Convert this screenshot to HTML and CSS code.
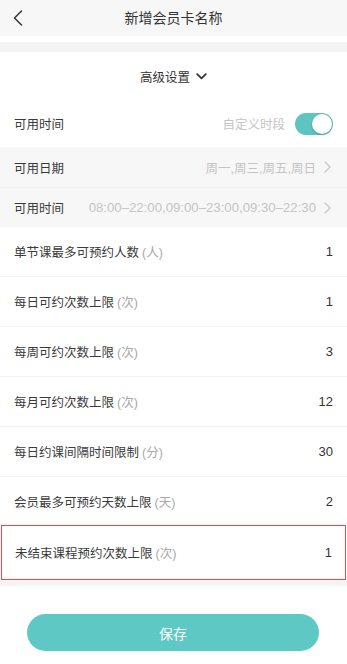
FILE: index.html
```html
<!DOCTYPE html>
<html lang="zh-CN">
<head>
<meta charset="utf-8">
<title>新增会员卡名称</title>
<link rel="stylesheet" href="styles.css">
</head>
<body>
<div class="page">
  <header class="topbar">
    <span class="back">
      <svg width="10" height="16" viewBox="0 0 10 16"><path d="M8.5 1 L1.5 8 L8.5 15" fill="none" stroke="#333" stroke-width="1.5" stroke-linecap="round" stroke-linejoin="round"/></svg>
    </span>
    <h1 class="title">新增会员卡名称</h1>
    <span></span>
  </header>
  <div class="spacer-white"></div>
  <div class="spacer-gray"></div>

  <section class="panel">
    <div class="adv">
      <span>高级设置</span>
      <svg class="down" width="11" height="7" viewBox="0 0 11 7"><path d="M1.2 1.2 L5.5 5.4 L9.8 1.2" fill="none" stroke="#333" stroke-width="1.8" stroke-linecap="round" stroke-linejoin="round"/></svg>
    </div>

    <div class="row row-toggle">
      <span class="label">可用时间</span>
      <span class="right">
        <span class="hint">自定义时段</span>
        <span class="switch"><span class="knob"></span></span>
      </span>
    </div>

    <div class="sub">
      <span class="label">可用日期</span>
      <span class="right"><span class="hint">周一,周三,周五,周日</span><svg class="chev" width="7" height="12" viewBox="0 0 7 12"><path d="M1 1 L6 6 L1 11" fill="none" stroke="#c8c8c8" stroke-width="1.3" stroke-linecap="round" stroke-linejoin="round"/></svg></span>
    </div>
    <div class="sub sub-2">
      <span class="label">可用时间</span>
      <span class="right"><span class="hint times">08:00–22:00,09:00–23:00,09:30–22:30</span><svg class="chev" width="7" height="12" viewBox="0 0 7 12"><path d="M1 1 L6 6 L1 11" fill="none" stroke="#c8c8c8" stroke-width="1.3" stroke-linecap="round" stroke-linejoin="round"/></svg></span>
    </div>

    <div class="row"><span class="label">单节课最多可预约人数<span class="unit">(人)</span></span><span class="val">1</span></div>
    <div class="row"><span class="label">每日可约次数上限<span class="unit">(次)</span></span><span class="val">1</span></div>
    <div class="row"><span class="label">每周可约次数上限<span class="unit">(次)</span></span><span class="val">3</span></div>
    <div class="row"><span class="label">每月可约次数上限<span class="unit">(次)</span></span><span class="val">12</span></div>
    <div class="row"><span class="label">每日约课间隔时间限制<span class="unit">(分)</span></span><span class="val">30</span></div>
    <div class="row row-last"><span class="label">会员最多可预约天数上限<span class="unit">(天)</span></span><span class="val">2</span></div>
    <div class="highlight">
      <div class="row row-in"><span class="label">未结束课程预约次数上限<span class="unit">(次)</span></span><span class="val">1</span></div>
    </div>
  </section>

  <div class="spacer-gray small"></div>

  <footer class="footer">
    <button class="save" type="button">保存</button>
  </footer>
</div>
</body>
</html>
```
FILE: styles.css
```css
html, body {
  margin: 0;
  padding: 0;
  background: #ffffff;
}
body {
  font-family: "Liberation Sans", "Noto Sans CJK SC", sans-serif;
  color: #3a3a3a;
  font-size: 12.5px;
}
.page {
  width: 347px;
  height: 664px;
  overflow: hidden;
  background: #fff;
}
.topbar {
  height: 36px;
  background: #f7f7f7;
  display: grid;
  grid-template-columns: 36px 1fr 36px;
  align-items: center;
}
.back {
  display: flex;
  align-items: center;
  padding-left: 13px;
}
.title {
  margin: 0;
  font-size: 14px;
  font-weight: normal;
  text-align: center;
  color: #333;
  line-height: 36px;
}
.spacer-white { height: 6px; background: #fff; }
.spacer-gray { height: 10px; background: #f4f4f4; }
.spacer-gray.small { height: 6px; }

.adv {
  height: 48px;
  display: flex;
  align-items: center;
  justify-content: center;
  gap: 6px;
  color: #333;
  font-size: 12.5px;
}
.down { margin-top: 1px; }

.row {
  height: 49px;
  border-bottom: 1px solid #f2f2f2;
  display: flex;
  align-items: center;
  justify-content: space-between;
  padding: 0 14px;
}
.row.row-toggle {
  height: 47px;
  border-bottom: none;
}
.row.row-last { height: 48px; border-bottom: none; }
.highlight {
  margin: 0 1px;
  background-color: rgb(242, 68, 68);
  padding: 1px;
}
.row.row-in {
  height: 53px;
  border-bottom: none;
  padding: 0 13px 0 13px;
  background: #fff;
}
.label { color: #3a3a3a; white-space: nowrap; }
.unit { color: #a8a8a8; margin-left: 3px; }
.val { color: #333; font-size: 13px; }
.right { display: flex; align-items: center; }
.hint { color: #c4c4c4; font-size: 12.5px; white-space: nowrap; }
.times { font-size: 13.2px; }

.switch {
  width: 38px;
  height: 22px;
  border-radius: 11px;
  background: #5cc5c0;
  margin-left: 10px;
  display: flex;
  align-items: center;
  justify-content: flex-end;
  padding: 0 1px;
  box-sizing: border-box;
}
.knob {
  width: 20px;
  height: 20px;
  border-radius: 50%;
  background: #fff;
  box-shadow: 0 1px 2px rgba(0,0,0,0.25);
}

.sub {
  height: 40px;
  background: #f7f7f7;
  display: flex;
  align-items: center;
  justify-content: space-between;
  padding: 0 16px 0 14px;
  box-sizing: border-box;
}
.sub-2 { border-top: 1px solid #efefef; }
.chev {
  margin-left: 8px;
  display: block;
}

.footer {
  padding-top: 28px;
  display: flex;
  justify-content: center;
}
.save {
  width: 292px;
  height: 37px;
  border: none;
  border-radius: 19px;
  background: #5ec8c5;
  color: #fff;
  font-family: "Liberation Sans", "Noto Sans CJK SC", sans-serif;
  font-size: 14px;
  margin-left: -1px;
}
```
